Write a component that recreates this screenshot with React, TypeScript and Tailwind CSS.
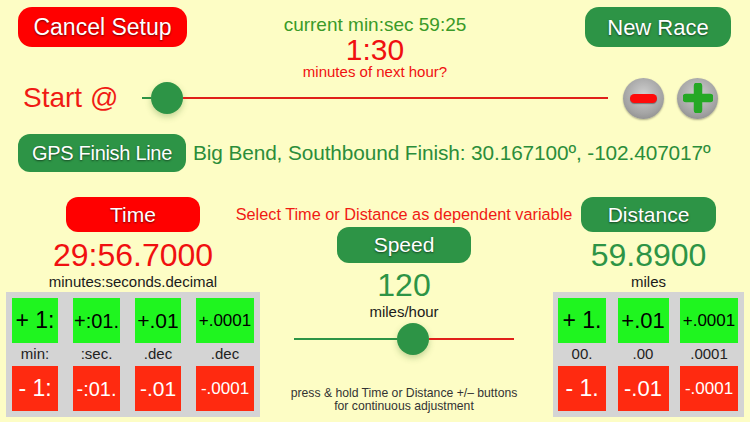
import React from "react";

const font = "font-['Liberation_Sans',Arial,sans-serif]";
const btnText = "text-white [text-shadow:0_1px_2px_rgba(0,0,0,0.55)]";

type Pad = { plus: string; minus: string; label: string; width: string; size: string };

const timePads: Pad[] = [
  { plus: "+ 1:", minus: "- 1:", label: "min:", width: "w-[46px]", size: "text-[23px]" },
  { plus: "+:01.", minus: "-:01.", label: ":sec.", width: "w-[47px]", size: "text-[20px]" },
  { plus: "+.01", minus: "-.01", label: ".dec", width: "w-[46px]", size: "text-[21px]" },
  { plus: "+.0001", minus: "-.0001", label: ".dec", width: "w-[58px]", size: "text-[17px]" },
];

const distancePads: Pad[] = [
  { plus: "+ 1.", minus: "- 1.", label: "00.", width: "w-[48px]", size: "text-[23px]" },
  { plus: "+.01", minus: "-.01", label: ".00", width: "w-[51px]", size: "text-[22px]" },
  { plus: "+.0001", minus: "-.0001", label: ".0001", width: "w-[58px]", size: "text-[17px]" },
];

function PadPanel({ pads, pad }: { pads: Pad[]; pad: string }) {
  return (
    <div className={`flex justify-between bg-[#d4d4d4] py-[6px] ${pad}`}>
      {pads.map((p, i) => (
        <div key={i} className={`flex flex-col items-center ${p.width}`}>
          <div className={`flex h-[45px] w-full items-center justify-center bg-[#1ff51f] text-black ${p.size}`}>
            {p.plus}
          </div>
          <div className="flex h-[23px] items-center text-[15px] text-[#222]">{p.label}</div>
          <div className={`flex h-[45px] w-full items-center justify-center bg-[#ff2a10] text-white ${p.size}`}>
            {p.minus}
          </div>
        </div>
      ))}
    </div>
  );
}

function Thumb() {
  return <div className="h-[32px] w-[32px] shrink-0 rounded-full bg-[#2d9446] shadow-[0_3px_6px_rgba(60,120,40,0.3)]" />;
}

function RoundButton({ children }: { children: React.ReactNode }) {
  return (
    <div className="flex h-[41px] w-[41px] items-center justify-center rounded-full bg-[radial-gradient(circle_at_50%_40%,#cfcfcf,#a4a4a4_60%,#7e7e7e)] shadow-[0_1px_2px_rgba(0,0,0,0.3)]">
      {children}
    </div>
  );
}

export default function App() {
  return (
    <div className={`h-[422px] w-[750px] overflow-hidden bg-[#fdfdc5] ${font}`}>
      {/* top row */}
      <div className="grid h-[79px] grid-cols-[1fr_auto_1fr] items-start px-[18px] pt-[7px]">
        <div className="flex justify-start">
          <div className={`flex h-[40px] w-[169px] items-center justify-center rounded-[14px] bg-[#ff0000] text-[23px] ${btnText}`}>
            Cancel Setup
          </div>
        </div>
        <div className="flex flex-col items-center pt-[8px]">
          <div className="text-[19px] leading-[20px] text-[#3a9a28]">current min:sec 59:25</div>
          <div className="text-[30px] leading-[30px] text-[#f01010]">1:30</div>
          <div className="text-[15px] leading-[14px] text-[#f01010]">minutes of next hour?</div>
        </div>
        <div className="flex justify-end">
          <div className={`mr-px flex h-[40px] w-[146px] items-center justify-center rounded-[14px] bg-[#2d9446] text-[22px] ${btnText}`}>
            New Race
          </div>
        </div>
      </div>

      {/* start slider row */}
      <div className="flex h-[38px] items-center pl-[23px]">
        <div className="w-[119px] text-[28px] text-[#f01a14]">Start @</div>
        <div className="flex w-[466px] items-center">
          <div className="h-[2px] w-[9px] bg-[#2d9446]" />
          <Thumb />
          <div className="h-[2px] flex-1 bg-[#e0201a]" />
        </div>
        <div className="ml-[15px] flex gap-[13px]">
          <RoundButton>
            <div className="h-[9px] w-[27px] rounded-full bg-[#ff0a0a] shadow-[0_1px_1px_rgba(0,0,0,0.35)]" />
          </RoundButton>
          <RoundButton>
            <svg width="30" height="30" viewBox="0 0 30 30">
              <path d="M15 3v24M3 15h24" stroke="#25a825" strokeWidth="8.5" strokeLinecap="round" />
            </svg>
          </RoundButton>
        </div>
      </div>

      {/* GPS row */}
      <div className="mt-[17px] flex items-center gap-[7px] pl-[18px]">
        <div className={`flex h-[38px] w-[168px] items-center justify-center rounded-[12px] bg-[#2d9446] text-[20px] tracking-[-0.3px] ${btnText}`}>
          GPS Finish Line
        </div>
        <div className="whitespace-nowrap text-[20.8px] tracking-[-0.1px] text-[#2b8d3a]">
          Big Bend, Southbound Finish: 30.167100º, -102.407017º
        </div>
      </div>

      {/* bottom area */}
      <div className="mt-[25px] flex">
        {/* time column */}
        <div className="ml-[6px] flex w-[254px] shrink-0 flex-col items-center">
          <div className={`flex h-[35px] w-[134px] items-center justify-center rounded-[12px] bg-[#ff0000] text-[21px] ${btnText}`}>
            Time
          </div>
          <div className="mt-[5px] text-[32px] leading-[36px] text-[#f01010]">29:56.7000</div>
          <div className="text-[15px] leading-[18px] text-[#1a1a1a]">minutes:seconds.decimal</div>
          <div className="mt-px w-full">
            <PadPanel pads={timePads} pad="px-[6px]" />
          </div>
        </div>

        {/* speed column */}
        <div className="flex min-w-0 flex-1 flex-col items-center pr-[5px]">
          <div className="mt-[8px] whitespace-nowrap text-[16.3px] leading-[18px] text-[#f01a14]">
            Select Time or Distance as dependent variable
          </div>
          <div className={`mt-[4px] flex h-[36px] w-[134px] items-center justify-center rounded-[12px] bg-[#2d9446] text-[21px] ${btnText}`}>
            Speed
          </div>
          <div className="mt-[4px] text-[32px] leading-[36px] text-[#2d9446]">120</div>
          <div className="text-[15px] leading-[18px] text-[#1a1a1a]">miles/hour</div>
          <div className="mt-[2px] flex w-[220px] items-center">
            <div className="h-[2px] w-[103px] bg-[#2d9446]" />
            <Thumb />
            <div className="h-[2px] flex-1 bg-[#e0201a]" />
          </div>
          <div className="mt-[32px] whitespace-nowrap text-center text-[12.2px] leading-[13px] text-[#333]">
            press &amp; hold Time or Distance +/– buttons
            <br />
            for continuous adjustment
          </div>
        </div>

        {/* distance column */}
        <div className="mr-[6px] flex w-[191px] shrink-0 flex-col items-center">
          <div className={`flex h-[35px] w-[135px] items-center justify-center rounded-[12px] bg-[#2d9446] text-[21px] ${btnText}`}>
            Distance
          </div>
          <div className="mt-[5px] text-[32px] leading-[36px] text-[#2d9446]">59.8900</div>
          <div className="text-[15px] leading-[18px] text-[#1a1a1a]">miles</div>
          <div className="mt-px w-full">
            <PadPanel pads={distancePads} pad="pl-[5px] pr-[6px]" />
          </div>
        </div>
      </div>
    </div>
  );
}
